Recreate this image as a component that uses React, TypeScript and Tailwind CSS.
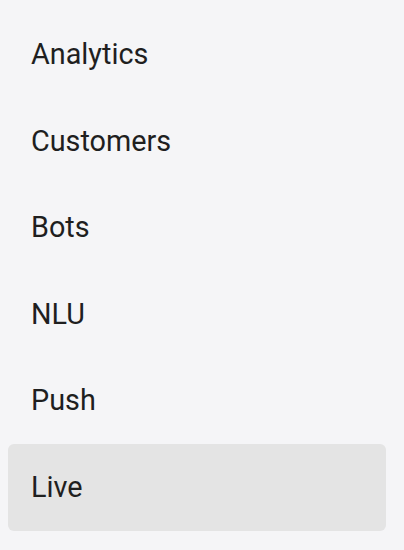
import React from 'react';

const items = ['Analytics', 'Customers', 'Bots', 'NLU', 'Push', 'Live'];

export default function App() {
  const active = 'Live';

  return (
    <div className="w-[404px] h-[550px] bg-[#f5f5f7] overflow-hidden font-['Roboto',sans-serif]">
      <nav className="flex flex-col pt-[11.5px] pl-2 pr-[18px]">
        {items.map((item) => (
          <div
            key={item}
            className={
              item === active
                ? 'h-[86.5px] flex items-center pl-[23px] rounded-md bg-[#e4e4e4] text-[28.8px] text-[#1f1f1f]'
                : 'h-[86.5px] flex items-center pl-[23px] rounded-md text-[28.8px] text-[#1f1f1f]'
            }
          >
            {item}
          </div>
        ))}
      </nav>
    </div>
  );
}
